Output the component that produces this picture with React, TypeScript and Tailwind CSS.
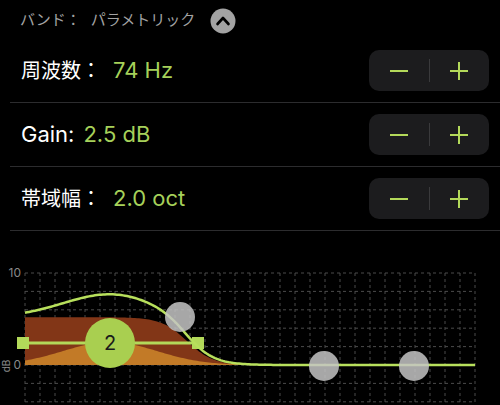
const font = { fontFamily: 'Inter, "Noto Sans CJK JP", sans-serif' };

const zeroY = 365;
const dbPx = 9.2;

const shelf = (x: number) => 5.2 / (1 + Math.exp((x - 187) / 13));
const bell = (x: number) => 2.5 * Math.exp(-((x - 110) ** 2) / (2 * 47 * 47));
const toY = (db: number) => zeroY - db * dbPx;

function buildPath(fn: (x: number) => number, closed: boolean) {
  const pts: string[] = [];
  for (let x = 25; x <= 475; x += 2) {
    pts.push(`${x},${toY(fn(x)).toFixed(2)}`);
  }
  if (closed) return `M25,${zeroY} L${pts.join(" L")} L475,${zeroY} Z`;
  return `M${pts.join(" L")}`;
}

function Stepper() {
  return (
    <div className="flex h-[41px] w-[120px] items-center rounded-[10px] bg-[#1c1c1e]">
      <button className="flex h-full flex-1 items-center justify-center">
        <svg width="20" height="20" viewBox="0 0 20 20">
          <path d="M1 10 H19" stroke="#b3d95a" strokeWidth="2" />
        </svg>
      </button>
      <div className="h-[23px] w-px bg-[#3a3a3c]" />
      <button className="flex h-full flex-1 items-center justify-center">
        <svg width="20" height="20" viewBox="0 0 20 20">
          <path d="M1 10 H19 M10 1 V19" stroke="#b3d95a" strokeWidth="2" />
        </svg>
      </button>
    </div>
  );
}

function Row({ label, value, labelSize, gap }: { label: string; value: string; labelSize: string; gap: string }) {
  return (
    <div className="ml-[10px] flex h-[64px] items-center justify-between border-b border-[#2c2c2e] pl-[11px] pr-[11px]">
      <div className="flex items-center">
        <span className={`${labelSize} text-white`}>{label}</span>
        <span className={`${gap} text-[22px] text-[#a6d15a]`}>{value}</span>
      </div>
      <Stepper />
    </div>
  );
}

function Chart() {
  const vLines = Array.from({ length: 31 }, (_, i) => 25 + i * 15);
  const hLines = Array.from({ length: 8 }, (_, j) => 273 + j * 18.4);
  return (
    <svg width="500" height="174" viewBox="0 231 500 174" className="block">
      {vLines.map((x) => (
        <line key={`v${x}`} x1={x} y1={273} x2={x} y2={405} stroke="#4a4a4a" strokeDasharray="3 3" />
      ))}
      {hLines.map((y) => (
        <line key={`h${y}`} x1={25} y1={y} x2={475} y2={y} stroke="#4a4a4a" strokeDasharray="3 3" />
      ))}
      <path d={buildPath(shelf, true)} fill="#823617" />
      <path d={buildPath(bell, true)} fill="#c27a27" />
      <line x1={23} y1={343} x2={198} y2={343} stroke="#b3d95a" strokeWidth="3" />
      <rect x={17} y={337} width={12} height={12} fill="#b3d95a" />
      <rect x={192} y={337} width={12} height={12} fill="#b3d95a" />
      <path d={buildPath((x) => shelf(x) + bell(x), false)} fill="none" stroke="#b8e05c" strokeWidth="2.5" />
      <circle cx={110} cy={343} r={25} fill="#a9cf50" />
      <text x={110} y={350} textAnchor="middle" fontSize="20" fill="#1a1a1a" style={font}>
        2
      </text>
      <circle cx={180} cy={317} r={15} fill="#c4c4c4" opacity="0.85" />
      <circle cx={324} cy={366} r={15} fill="#c4c4c4" opacity="0.85" />
      <circle cx={414} cy={366} r={15} fill="#c4c4c4" opacity="0.85" />
      <text x={21} y={277} textAnchor="end" fontSize="12" fill="#8a8a8a" style={font}>
        10
      </text>
      <text x={21} y={369} textAnchor="end" fontSize="12" fill="#8a8a8a" style={font}>
        0
      </text>
      <text x={0} y={0} fontSize="10" fill="#8a8a8a" textAnchor="middle" transform="translate(10,366) rotate(-90)" style={font}>
        dB
      </text>
    </svg>
  );
}

export default function App() {
  return (
    <div className="h-[405px] w-[500px] overflow-hidden bg-black" style={font}>
      <div className="flex h-[39px] items-center pl-[20px] pt-[2px] text-[15px] text-[#a3a3a3]">
        <span className="mr-[10px]">バンド：</span>
        <span>パラメトリック</span>
        <svg width="26" height="26" viewBox="-13 -13 26 26" className="ml-[15px]">
          <circle cx="0" cy="0" r="12.5" fill="#a3a3a3" />
          <path d="M-5.5 3 L0 -3 L5.5 3" fill="none" stroke="#000" strokeWidth="2.6" strokeLinejoin="round" strokeLinecap="round" />
        </svg>
      </div>
      <Row label="周波数：" value="74 Hz" labelSize="text-[20px]" gap="ml-[12px]" />
      <Row label="Gain:" value="2.5 dB" labelSize="text-[22px]" gap="ml-[9px]" />
      <Row label="帯域幅：" value="2.0 oct" labelSize="text-[20px]" gap="ml-[12px]" />
      <Chart />
    </div>
  );
}
